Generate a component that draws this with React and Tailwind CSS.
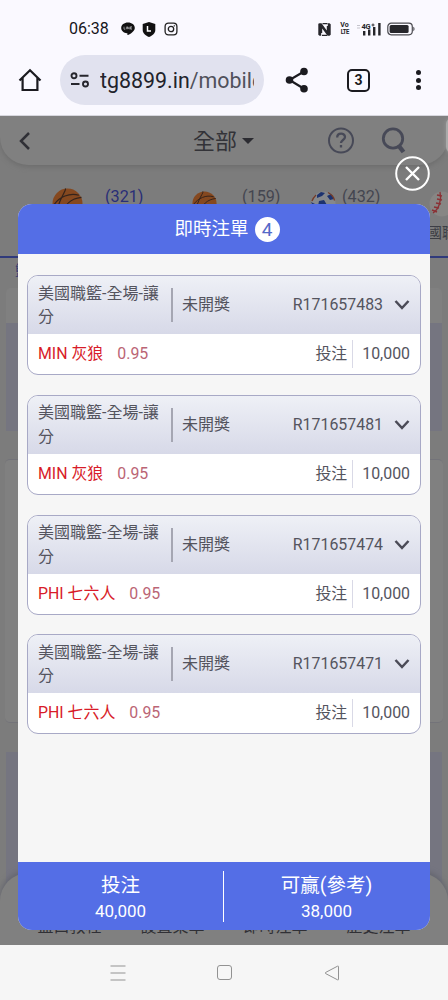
import clsx from 'clsx'

const bets = [
    { id: 'R171657483', team: 'MIN 灰狼', odds: '0.95', stake: '10,000' },
    { id: 'R171657481', team: 'MIN 灰狼', odds: '0.95', stake: '10,000' },
    { id: 'R171657474', team: 'PHI 七六人', odds: '0.95', stake: '10,000' },
    { id: 'R171657471', team: 'PHI 七六人', odds: '0.95', stake: '10,000' },
]

const menuItems = ['盤口教程', '設置菜單', '即時注單', '歷史注單']

function StatusBar() {
    return (
        <div className="h-[55px] pt-[18px] pl-[69px] pr-[33px] flex items-start justify-between">
            <div className="flex items-center h-[22px]">
                <span className="w-[40px] text-[16px] leading-[22px] text-[#15151a] whitespace-nowrap">06:38</span>
                <svg className="ml-[12px]" width="14" height="14" viewBox="0 0 14 14">
                    <path d="M7 .5C3.200.5.2 2.900.2 5.900c0 2.700 2.500 4.900 5.800 5.300.4.100.5.400.4 1.200 0 .6.100.9.700.6 2.300-1.200 6.700-3.900 6.700-7.100C13.800 2.900 10.800.5 7 .5Z" fill="#111" />
                    <path d="M3 4.700v2.500h1.300M5.400 4.700v2.500M6.500 7.200V4.700l1.700 2.500V4.700M11 4.700H9.500v2.500H11M9.500 6H11" fill="none" stroke="#d5d5d8" strokeWidth=".6" />
                </svg>
                <svg className="ml-[7px]" width="14" height="15" viewBox="0 0 14 15">
                    <path d="M7 0 13.300 2v6c0 3.500-2.800 5.500-6.300 7C3.500 13.500.7 11.500.7 8V2Z" fill="#111" />
                    <path d="M5.500 4v5h3.500" fill="none" stroke="#fff" strokeWidth="1.500" />
                </svg>
                <svg className="ml-[8px]" width="14" height="14" viewBox="0 0 14 14" fill="none" stroke="#222">
                    <rect x="1.100" y="1.100" width="11.800" height="11.800" rx="3.300" strokeWidth="1.300" />
                    <circle cx="7" cy="7" r="2.700" strokeWidth="1.300" />
                    <circle cx="10.300" cy="3.800" r=".4" strokeWidth=".8" />
                </svg>
            </div>
            <div className="flex items-center h-[22px]">
                <svg width="13" height="13" viewBox="0 0 13 13">
                    <path d="M.3.8 1.500.2H3.500L8.800 7.500V3h1v-2.800h1.700l1.200 1v10.600l-1.200.9H9.500L4.200 5.500V10h-1v2.800H1.500l-1.200-1Z" fill="#26262b" />
                    <path d="M4.500.7h5M4 12.300h5" stroke="#26262b" strokeWidth="1.200" />
                </svg>
                <div className="ml-[8px] w-[11px] flex flex-col items-center text-[7px] leading-[7px] font-bold text-[#26262b]">
                    <span>Vo</span>
                    <span className="tracking-[-0.6px] scale-x-[0.85]">LTE</span>
                </div>
                <svg className="ml-[6px]" width="26" height="14" viewBox="0 0 26 14">
                    <path d="M1 3.500h3M1 6h3" stroke="#c5c4cc" strokeWidth="1" />
                    <text x="5.500" y="6.500" fontSize="7.500" fontWeight="bold" fill="#26262b" letterSpacing="-.3">4G</text>
                    <path d="M15.500 3h3M17 1.500v3" stroke="#26262b" strokeWidth=".9" />
                    <path d="M8.200 9v4.500M13.200 7.500v6M18.200 5v8.500M23.400 1v12.500" stroke="#26262b" strokeWidth="2.400" />
                </svg>
                <svg className="ml-[5px]" width="28" height="14" viewBox="0 0 28 14">
                    <rect x=".8" y="1.200" width="24.500" height="11.600" rx="3.500" fill="none" stroke="#4a4a50" strokeWidth="1.200" />
                    <rect x="2.600" y="3" width="19" height="8" rx="1.500" fill="#26262b" />
                    <path d="M26.300 4.800c1.600.6 1.600 3.800 0 4.400Z" fill="#4a4a50" />
                </svg>
            </div>
        </div>
    )
}

function AddressBar() {
    return (
        <div className="h-[50px] pl-[18px] flex items-center">
            <svg width="24" height="24" viewBox="0 0 24 24" fill="none" stroke="#1b1b20" strokeWidth="2.200">
                <path d="M1.500 12.500 12 2.200l10.500 10.300M4.600 10v12h14.800V10" />
            </svg>
            <div className="ml-[18px] w-[204px] h-[50px] rounded-full bg-[#e1e2ef] flex items-center pl-[10px]">
                <svg width="20" height="16" viewBox="0 0 20 16" fill="none" stroke="#26262d" strokeWidth="1.900">
                    <circle cx="4" cy="3.800" r="2.500" />
                    <path d="M9.500 3.800h9M1 12h8.500" />
                    <circle cx="15.500" cy="12" r="2.500" />
                </svg>
                <p className="ml-[10px] mt-[2px] w-[154px] overflow-hidden whitespace-nowrap text-[21.400px] leading-[30px] text-[#22232b]">
                    tg8899.in<span className="text-[#50515b]">/mobile</span>
                </p>
            </div>
            <svg className="ml-[21px]" width="24" height="26" viewBox="0 0 24 26">
                <path d="M19 4.500 4.500 13 19 21.800" fill="none" stroke="#1b1b20" strokeWidth="2.200" />
                <circle cx="19" cy="4.500" r="3.800" fill="#1b1b20" />
                <circle cx="4.500" cy="13" r="3.800" fill="#1b1b20" />
                <circle cx="19" cy="21.800" r="3.800" fill="#1b1b20" />
            </svg>
            <div className="ml-[38px] w-[23px] h-[23px] rounded-[5px] border-2 border-[#1b1b20] flex items-center justify-center text-[14px] leading-none font-bold text-[#1b1b20]">3</div>
            <div className="ml-[46px] flex flex-col gap-[2.500px]">
                <i className="w-[5px] h-[5px] rounded-full bg-[#1b1b20]" />
                <i className="w-[5px] h-[5px] rounded-full bg-[#1b1b20]" />
                <i className="w-[5px] h-[5px] rounded-full bg-[#1b1b20]" />
            </div>
        </div>
    )
}

function Basketball({ size }) {
    return (
        <svg className="shrink-0" width={size} height={size} viewBox="0 0 30 30">
            <circle cx="15" cy="15" r="14.500" fill="#85481f" />
            <path d="M2 16C7 9 17 4 26 7M13 .5c1 2-4 6-8 20M9 28C11 16 19 10 28.500 9" fill="none" stroke="#34231b" strokeWidth="1.200" />
        </svg>
    )
}

function SoccerBall() {
    return (
        <svg width="25" height="25" viewBox="0 0 25 25">
            <circle cx="12.500" cy="12.500" r="12" fill="#85888c" />
            <path d="m6 4 4-3 4 1-3 3-5 2ZM16 5l4-2 3 5-4 1ZM8 10l5-1 3 5-5 4-4-3ZM0 11l4 2v6Z" fill="#1c326f" />
            <path d="M17 1.500c4 2 6 5 6.500 8M1 10c1-3 2-4 4-6" fill="none" stroke="#743b27" strokeWidth="1.300" />
        </svg>
    )
}

function Baseball() {
    return (
        <svg className="shrink-0" width="26" height="26" viewBox="0 0 26 26">
            <circle cx="13" cy="13" r="12.500" fill="#878684" />
            <path d="M11 1c2 8-1 17-7 21" fill="none" stroke="#8b3034" strokeWidth="1.300" />
            <path d="m8 4 5 1M8 8l5 1M7 12l5 1M5 16l5 1M3 19l5 2" stroke="#8b3034" strokeWidth="1.600" />
        </svg>
    )
}

function LobbyHeader() {
    return (
        <header className="relative h-[49px] rounded-b-[28px] bg-[#808080] shadow-[0_2px_5px_#6d6d6d] flex items-center pl-[15px]">
            <svg width="20" height="18" viewBox="0 0 20 18" fill="none" stroke="#303036" strokeWidth="2.500">
                <path d="M14 1 6 9l8 8" />
            </svg>
            <span className="ml-[158px] mt-[2px] text-[22px] leading-[30px] text-[#333338]">全部</span>
            <i className="ml-[5px] border-x-[6px] border-t-[6px] border-x-transparent border-t-[#2b2b31]" />
            <svg className="ml-[73px]" width="28" height="28" viewBox="0 0 28 28" fill="none" stroke="#474957" strokeWidth="2">
                <circle cx="14" cy="13.500" r="12" />
                <path d="M10.200 10.500c0-5 7.800-5 7.800-.5 0 3-4 3-4 6M14 18v2.500" strokeWidth="2.300" />
            </svg>
            <svg className="ml-[26px]" width="26" height="28" viewBox="0 0 26 28" fill="none" stroke="#474957">
                <circle cx="12" cy="11.500" r="9.700" strokeWidth="2.800" />
                <path d="m17.500 18.500 5 6.500" strokeWidth="4.500" />
            </svg>
        </header>
    )
}

function SportTabs() {
    return (
        <div className="h-[93px] pt-[23px] border-b-2 border-[#303a7b] flex items-start overflow-hidden">
            <div className="w-[139px] shrink-0 pl-[52px] flex items-start">
                <Basketball size={31} />
                <span className="ml-[22px] text-[16.200px] leading-[17px] text-[#292e77]">(321)</span>
            </div>
            <div className="w-[118px] shrink-0 pl-[53px] flex items-start">
                <div className="mt-[3px] shrink-0"><Basketball size={25} /></div>
                <span className="ml-[25px] text-[16.200px] leading-[17px] text-[#444650]">(159)</span>
            </div>
            <div className="w-[170px] shrink-0 pl-[54px] flex items-start">
                <div className="mt-[3px] shrink-0"><SoccerBall /></div>
                <span className="ml-[6px] text-[16.200px] leading-[17px] text-[#444650]">(432)</span>
            </div>
            <div className="shrink-0 pt-[3px]">
                <div className="pl-[2px]"><Baseball /></div>
                <span className="block mt-[7px] text-[15px] leading-[18px] text-[#3d3e45]">國職</span>
            </div>
        </div>
    )
}

function BetCard({ bet }) {
    return (
        <article className="h-[100px] rounded-[11px] border-[1.500px] border-[#a8a9c6] bg-white overflow-hidden text-[#54545e]">
            <div className="h-[58px] flex items-center bg-gradient-to-b from-[#eef0f6] to-[#d7d9e8] px-[10px]">
                <p className="w-[133px] text-[16px] leading-[23.500px]">美國職籃-全場-讓<br />分</p>
                <i className="w-[2px] h-[34px] bg-[#a5a6b2]" />
                <span className="ml-[9px] text-[16px]">未開獎</span>
                <span className="ml-auto text-[15.900px]">{bet.id}</span>
                <svg className="ml-[11px]" width="16" height="12" viewBox="0 0 16 12" fill="none" stroke="#4b4b57" strokeWidth="2.500">
                    <path d="m1.500 2 6.500 7 6.500-7" />
                </svg>
            </div>
            <div className="h-[40px] flex items-center px-[10px] text-[15.900px]">
                <span className="text-[#d81c29]">{bet.team}</span>
                <span className="ml-[14px] text-[#bb6575]">{bet.odds}</span>
                <span className="ml-auto">投注</span>
                <i className="ml-[5px] mr-[9px] w-px h-[28px] bg-[#d9d9e6]" />
                <span>{bet.stake}</span>
            </div>
        </article>
    )
}

function BetModal() {
    return (
        <section className="absolute left-[18px] top-[88px] w-[412px] h-[726px] rounded-[14px] bg-[#f6f6f6] overflow-hidden flex flex-col">
            <div className="h-[50px] shrink-0 bg-[#546ee6] flex items-center justify-center gap-[6px] pl-[6px] text-white">
                <h1 className="mt-[2px] text-[18.500px]">即時注單</h1>
                <span className="w-[25px] h-[25px] rounded-full bg-white text-[#5469c8] text-[19px] leading-[26px] text-center">4</span>
            </div>
            <div className="flex-1 px-[9px] pt-[21px] flex flex-col gap-[19.800px]">
                {bets.map(bet => <BetCard key={bet.id} bet={bet} />)}
            </div>
            <div className="h-[68px] shrink-0 bg-[#546ee6] flex items-center pr-[1px] text-white text-center">
                <div className="flex-1 pt-[3px]">
                    <p className="text-[19.500px] leading-[27px]">投注</p>
                    <p className="text-[17px] leading-[24px]">40,000</p>
                </div>
                <i className="w-px h-[51px] bg-white" />
                <div className="flex-1 pt-[3px]">
                    <p className="text-[19.500px] leading-[27px]">可贏(參考)</p>
                    <p className="text-[17px] leading-[24px]">38,000</p>
                </div>
            </div>
        </section>
    )
}

function MatchPanels() {
    return (
        <div className="h-[687px] flex flex-col">
            <div className="h-[30px] pl-[15px] pt-[3px] text-[14px] leading-[18px] text-[#343a70]">籃</div>
            <div className="mx-[6px] h-[35px] rounded-t-[5px] bg-[#808080]" />
            <div className="mx-[6px] h-[108px] bg-[#757580]" />
            <div className="h-[28px] bg-[#7c7c7c]" />
            <div className="mx-[5px] h-[264px] rounded-[5px] border-y border-[#737379] bg-[#808080]" />
            <div className="h-[29px] bg-[#7c7c7c]" />
            <div className="mx-[6px] flex-1 bg-[#757580]" />
        </div>
    )
}

export default function App() {
    return (
        <div className={clsx('w-[448px] h-[1000px] overflow-hidden bg-[#f6f6f6]', "font-[Roboto,'Noto_Sans_CJK_TC',sans-serif]")}>
            <div className="h-[116px] bg-[#faf9ff] border-b border-[#d7d7de]">
                <StatusBar />
                <AddressBar />
            </div>
            <main className="relative h-[829px] bg-[#7c7c7c] overflow-hidden">
                <LobbyHeader />
                <SportTabs />
                <MatchPanels />
                <nav className="absolute inset-x-0 bottom-0 h-[72px] rounded-t-[28px] bg-[#808080] shadow-[0_-3px_5px_#666770] flex items-end justify-center gap-[39px] pb-[9px] text-[16px] leading-[18px] text-[#303036]">
                    {menuItems.map(item => <span key={item}>{item}</span>)}
                </nav>
                {/* edge of the floating panel */}
                <i className="absolute left-[446px] top-[2px] w-[12px] h-[35px] rounded-l-[6px] bg-[#aaa] shadow-[0_0_4px_#999]" />
                <BetModal />
                <button aria-label="close" className="absolute left-[395px] top-[40px] w-[35px] h-[35px]">
                    <svg width="35" height="35" viewBox="0 0 35 35" fill="none" stroke="#fff">
                        <circle cx="17.500" cy="17.500" r="16.300" strokeWidth="2" />
                        <path d="m11 11 13 13M24 11 11 24" strokeWidth="2.400" />
                    </svg>
                </button>
            </main>
            <footer className="h-[55px] flex items-center justify-center pl-[2px]">
                <svg width="16" height="16" viewBox="0 0 16 16" fill="none" stroke="#929292">
                    <path d="M.5 1h15M.5 8h15M.5 15h15" strokeWidth="1.200" />
                </svg>
                <i className="ml-[91px] w-[15px] h-[15px] rounded-[3px] border border-[#929292]" />
                <svg className="ml-[92px]" width="16" height="16" viewBox="0 0 16 16" fill="none" stroke="#929292">
                    <path d="M14.500 1.500v13a.5.5 0 0 1-.8.4L1.500 8.500a.6.6 0 0 1 0-1L13.700 1.100a.5.5 0 0 1 .8.4Z" />
                </svg>
            </footer>
        </div>
    )
}
